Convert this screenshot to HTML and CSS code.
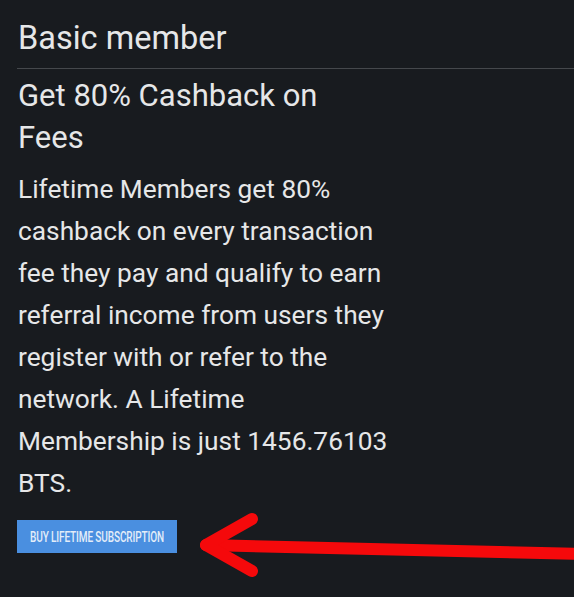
FILE: index.html
```
<!DOCTYPE html>
<html lang="en">
<head>
    <meta charset="UTF-8">
    <meta name="viewport" content="width=device-width, initial-scale=1.0">
    <title>Basic member</title>
    <link rel="stylesheet" href="styles.css">
</head>
<body>

<div id="membership">
    <h2 class="title">Basic member</h2>
    <hr class="divider">

    <div class="content">
        <h3 class="subtitle">Get 80% Cashback on Fees</h3>
        <p class="description">
            Lifetime Members get 80% cashback on every transaction fee they pay and qualify to earn
            referral income from users they register with or refer to the network. A Lifetime
            Membership is just 1456.76103 BTS.
        </p>
        <button class="buy-btn"><span>Buy lifetime subscription</span></button>
    </div>

    <!-- annotation arrow pointing at the button -->
    <svg class="arrow" width="574" height="597" viewBox="0 0 574 597">
        <line x1="206" y1="545" x2="580" y2="554" stroke="#f5090b" stroke-width="12" stroke-linecap="round"/>
        <polyline points="252,519 206,545 252,571" fill="none" stroke="#f5090b" stroke-width="12" stroke-linecap="round" stroke-linejoin="round"/>
    </svg>
</div>

</body>
</html>
```

FILE: styles.css
```
body {
    font-family: Roboto, "Liberation Sans", sans-serif;
    background-color: #181b1f;
    color: #e6e7e8;
    margin: 0;
    padding: 0;
}
#membership {
    position: relative;
    height: 597px;
    padding: 18px 0 0 18px;
    box-sizing: border-box;
    overflow: hidden;
}
.title {
    font-size: 32.5px;
    font-weight: 400;
    line-height: 40px;
    margin: 0 0 10px 0;
}
.divider {
    border: none;
    border-top: 1px solid #45484c;
    margin: 0 0 0 -1px;
}
.content {
    max-width: 371px;
}
.subtitle {
    font-size: 31px;
    font-weight: 400;
    line-height: 42px;
    margin: 6px 0 9px 0;
}
.description {
    font-size: 26.3px;
    line-height: 42px;
    margin: 0 0 16px 0;
}
.buy-btn {
    display: flex;
    justify-content: center;
    align-items: center;
    width: 160px;
    height: 33px;
    margin-left: -1px;
    padding: 0;
    border: none;
    background-color: #4a8fe0;
    color: #e3edf9;
    font-family: Roboto, sans-serif;
    font-size: 15px;
    font-weight: 500;
    text-transform: uppercase;
    white-space: nowrap;
    overflow: hidden;
}
.buy-btn span {
    flex-shrink: 0;
    transform: scaleX(0.67);
    letter-spacing: -0.2px;
}
.arrow {
    position: absolute;
    left: 0;
    top: 0;
    pointer-events: none;
}
```
